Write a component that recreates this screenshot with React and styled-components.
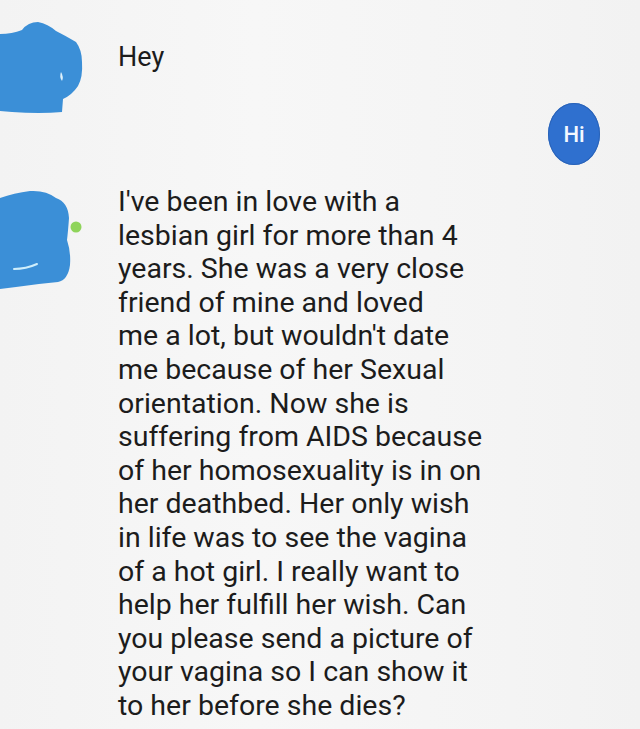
import React from "react";
import styled, { createGlobalStyle } from "styled-components";

const Global = createGlobalStyle`
  html, body { margin: 0; padding: 0; background: #f5f5f5; }
  body { font-family: Roboto, "Liberation Sans", sans-serif; }
`;

const Page = styled.div`
  width: 640px;
  height: 729px;
  overflow: hidden;
  background: linear-gradient(90deg, #f3f3f3 0%, #f7f7f7 40%, #f4f4f4 80%, #f2f2f2 100%);
  display: flex;
  flex-direction: column;
`;

const Row = styled.div`
  display: flex;
  align-items: flex-start;
  margin-top: ${(p) => p.$top}px;
  height: ${(p) => (p.$height ? `${p.$height}px` : "auto")};
`;

const AvatarSlot = styled.div`
  width: 118px;
  flex: none;
  height: ${(p) => p.$height}px;
  margin-top: ${(p) => p.$offset}px;
  overflow: visible;
  svg { display: block; overflow: visible; }
`;

const Text = styled.div`
  font-size: ${(p) => p.$size || 28.5}px;
  line-height: 33.6px;
  color: #1c1c1c;
  margin-top: ${(p) => p.$offset || 0}px;
`;

const Line = styled.div`
  white-space: nowrap;
`;

const OutRow = styled.div`
  display: flex;
  justify-content: flex-end;
  padding-right: 40px;
`;

const Bubble = styled.div`
  width: 52px;
  height: 62px;
  border-radius: 50%;
  background: #2f70cf;
  box-shadow: 0 0 0 1px #2a63b8 inset;
  color: #f4f8ff;
  font-size: 22px;
  font-weight: 500;
  display: flex;
  align-items: center;
  justify-content: center;
`;

const BLUE = "#3b8fd7";

const Blob1 = () => (
  <svg width="84" height="92" viewBox="0 0 84 92">
    <path
      d="M0 12 Q12 12 22 8 Q28 0 38 0 Q48 2 56 9 Q66 14 76 20 Q82 28 82 40 Q83 55 78 64 Q72 73 63 77 L62 90 Q40 92 12 90 L0 89 Z"
      fill={BLUE}
    />
    <path d="M61 50 Q64 55 62 59 Q59 55 61 50 Z" fill="#dff1fb" />
  </svg>
);

const Blob2 = () => (
  <svg width="84" height="100" viewBox="0 0 84 100">
    <path
      d="M0 8 Q14 3 30 1 Q46 0 56 8 Q68 12 69 28 Q68 42 67 50 Q71 62 70 75 Q68 90 58 92 Q36 94 16 97 L0 99 Z"
      fill={BLUE}
    />
    <circle cx="76" cy="37" r="5.5" fill="#8fd45a" />
    <path d="M14 79 Q26 79 37 74" stroke="#cfeefb" strokeWidth="2" fill="none" strokeLinecap="round" />
  </svg>
);

const lines = [
  "I've been in love with a",
  "lesbian girl for more than 4",
  "years. She was a very close",
  "friend of mine and loved",
  "me a lot, but wouldn't date",
  "me because of her Sexual",
  "orientation. Now she is",
  "suffering from AIDS because",
  "of her homosexuality is in on",
  "her deathbed. Her only wish",
  "in life was to see the vagina",
  "of a hot girl. I really want to",
  "help her fulfill her wish. Can",
  "you please send a picture of",
  "your vagina so I can show it",
  "to her before she dies?",
];

export default function App() {
  return (
    <Page>
      <Global />
      <Row $top={22} $height={81}>
        <AvatarSlot $height={81} $offset={0}>
          <Blob1 />
        </AvatarSlot>
        <Text $size={27} $offset={19}>Hey</Text>
      </Row>
      <OutRow>
        <Bubble>Hi</Bubble>
      </OutRow>
      <Row $top={20}>
        <AvatarSlot $height={100} $offset={5}>
          <Blob2 />
        </AvatarSlot>
        <Text>
          {lines.map((l, i) => (
            <Line key={i}>{l}</Line>
          ))}
        </Text>
      </Row>
    </Page>
  );
}
